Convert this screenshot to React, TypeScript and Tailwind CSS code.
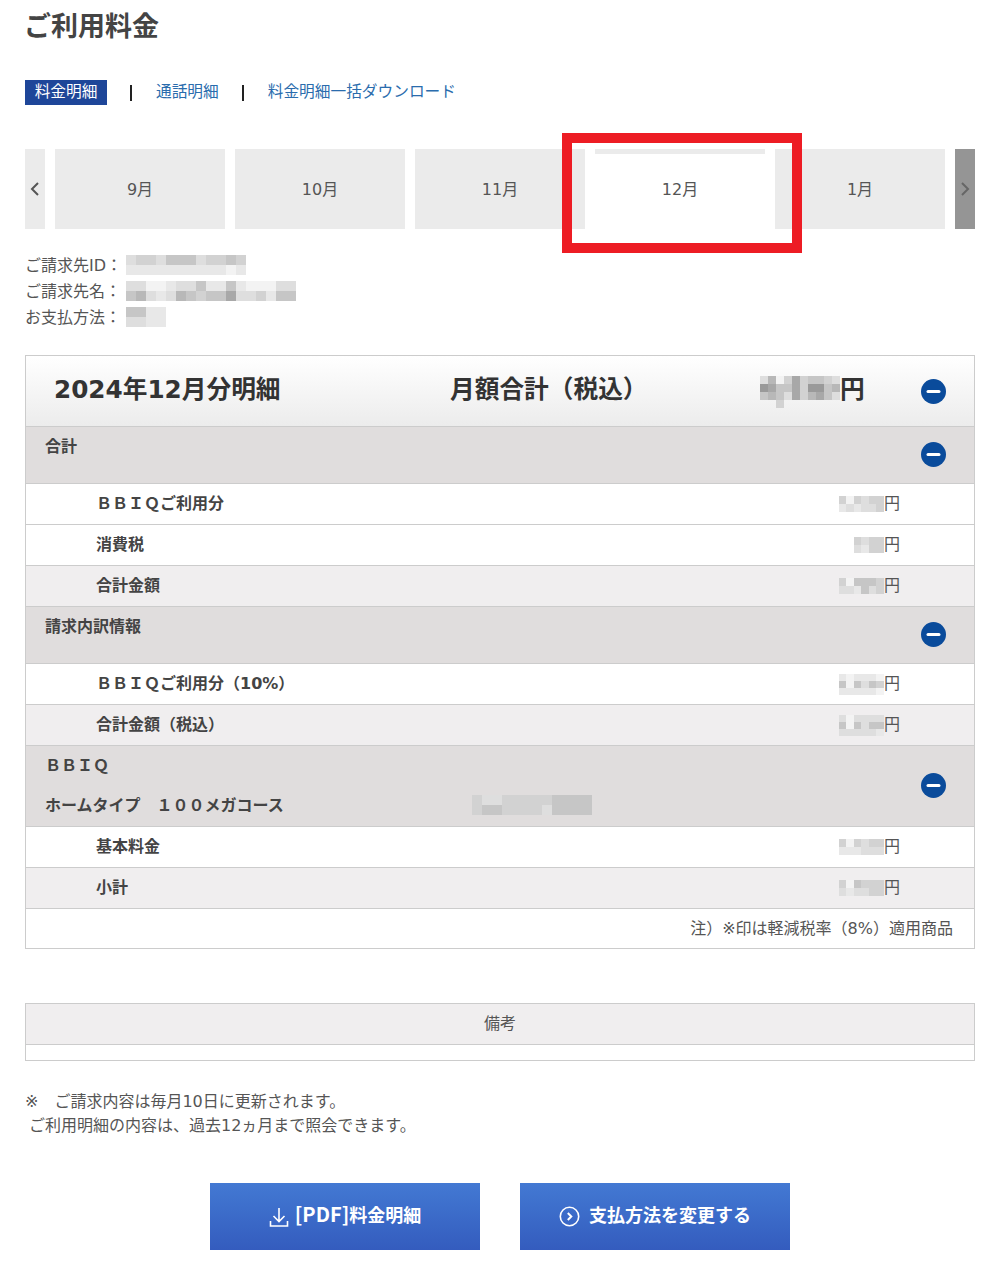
import React from "react";

const shade: Record<string, string> = {
  "0": "bg-transparent",
  "1": "bg-[#f3f3f3]",
  "2": "bg-[#e8e8e8]",
  "3": "bg-[#dedede]",
  "4": "bg-[#d2d2d2]",
  "5": "bg-[#c6c6c6]",
  "6": "bg-[#b8b8b8]",
  "7": "bg-[#a8a8a8]",
  "8": "bg-[#9a9a9a]",
};

function Mosaic({ rows, cell }: { rows: string[]; cell: string }) {
  return (
    <div className="flex flex-col shrink-0">
      {rows.map((r, i) => (
        <div key={i} className="flex">
          {r.split("").map((c, j) => (
            <div key={j} className={`${cell} ${shade[c]}`} />
          ))}
        </div>
      ))}
    </div>
  );
}

const big = "w-[10px] h-[10px]";
const two = "w-[7.5px] h-[8px]";
const three = "w-[7.5px] h-[7px]";
const head = "w-[8px] h-[8px]";

function MinusIcon() {
  return (
    <svg width="25" height="25" viewBox="0 0 25 25" className="shrink-0">
      <circle cx="12.5" cy="12.5" r="12.5" fill="#0a4b9b" />
      <line x1="7" y1="12.5" x2="18" y2="12.5" stroke="#fff" strokeWidth="3" strokeLinecap="round" />
    </svg>
  );
}

function Chevron({ dir, color }: { dir: "l" | "r"; color: string }) {
  return (
    <svg width="10" height="16" viewBox="0 0 10 16">
      <path d={dir === "l" ? "M8 2 L2 8 L8 14" : "M2 2 L8 8 L2 14"} fill="none" stroke={color} strokeWidth="2" />
    </svg>
  );
}

function Row({ label, rows, alt }: { label: string; rows: string[]; alt?: boolean }) {
  return (
    <div className={`h-[41px] border-b border-[#cccccc] flex items-center justify-between pl-[70px] pr-[74px] ${alt ? "bg-[#f0eeef]" : "bg-white"}`}>
      <span className="font-bold text-[#444444]">{label}</span>
      <div className="flex items-center text-[#555555]">
        <Mosaic rows={rows} cell={rows.length === 3 ? three : two} />
        <span>円</span>
      </div>
    </div>
  );
}

function Group({ label }: { label: string }) {
  return (
    <div className="h-[57px] border-b border-[#cccccc] bg-[#e0dddd] flex justify-between pl-[19px] pr-[28px]">
      <span className="font-bold text-[#444444] leading-[24px] pt-[8px]">{label}</span>
      <div className="flex items-center pb-[2px]"><MinusIcon /></div>
    </div>
  );
}

export default function App() {
  return (
    <div className="w-[1000px] h-[1273px] bg-white px-[25px] text-[16px] leading-[26px] text-[#555555] font-['DejaVu_Sans','Noto_Sans_CJK_JP',sans-serif] overflow-hidden">
      <h1 className="h-[52px] leading-[54px] -ml-[1px] text-[27px] font-bold text-[#444444]">ご利用料金</h1>

      <div className="mt-[28px] h-[25px] flex items-center text-[15.7px] text-[#2a6cad]">
        <span className="w-[82px] h-[25px] pb-[2px] bg-[#1e4699] text-white flex items-center justify-center">料金明細</span>
        <div className="ml-[23px] w-[2px] h-[16px] bg-[#222222]" />
        <span className="ml-[24px] pb-[2px]">通話明細</span>
        <div className="ml-[23px] w-[2px] h-[16px] bg-[#222222]" />
        <span className="ml-[24px] pb-[2px]">料金明細一括ダウンロード</span>
      </div>

      <div className="relative mt-[44px] h-[80px] flex gap-[10px] text-center">
        <div className="w-[20px] bg-[#ebebeb] flex items-center justify-center"><Chevron dir="l" color="#555555" /></div>
        {["9月", "10月", "11月"].map((m) => (
          <div key={m} className="w-[170px] bg-[#ebebeb] pt-[2px] flex items-center justify-center">{m}</div>
        ))}
        <div className="w-[170px] bg-white border-t-[5px] border-[#ebebeb] pb-[3px] flex items-center justify-center">12月</div>
        <div className="w-[170px] bg-[#ebebeb] pt-[2px] flex items-center justify-center">1月</div>
        <div className="w-[20px] bg-[#959595] flex items-center justify-center"><Chevron dir="r" color="#666666" /></div>
        <div className="absolute left-[537px] top-[-16px] w-[240px] h-[120px] border-[10px] border-[#ed1c24]" />
      </div>

      <div className="mt-[23px] h-[78px]">
        <div className="h-[26px] flex items-center">
          <span className="w-[101px] pt-[2px]">ご請求先ID：</span>
          <Mosaic cell={big} rows={["344355534454", "222222222212"]} />
        </div>
        <div className="h-[26px] flex items-center">
          <span className="w-[101px] pt-[2px]">ご請求先名：</span>
          <Mosaic cell={big} rows={["33112335225211133", "56323654557334255"]} />
        </div>
        <div className="h-[26px] flex items-center">
          <span className="w-[101px] pt-[2px]">お支払方法：</span>
          <Mosaic cell={big} rows={["5522", "3322"]} />
        </div>
      </div>

      <div className="mt-[25px] border border-[#cccccc]">
        <div className="h-[71px] border-b border-[#cccccc] bg-gradient-to-b from-white to-[#ececec] flex items-center font-bold text-[24.7px] text-[#333333]">
          <span className="w-[424px] pl-[28px] pb-[2px]">2024年12月分明細</span>
          <span className="w-[310px] pb-[2px]">月額合計（税込）</span>
          <div className="h-[32px] self-center mb-[-2px]">
            <Mosaic cell={head} rows={["3614745543", "8755748856", "5653746753", "0040000000"]} />
          </div>
          <span className="pb-[2px]">円</span>
          <div className="ml-auto mr-[28px]"><MinusIcon /></div>
        </div>

        <Group label="合計" />
        <Row label="ＢＢＩＱご利用分" rows={["414344", "232334"]} />
        <Row label="消費税" rows={["4344", "3244"]} />
        <Row label="合計金額" alt rows={["415554", "332534"]} />

        <Group label="請求内訳情報" />
        <Row label="ＢＢＩＱご利用分（10%）" rows={["212221", "515354", "222221"]} />
        <Row label="合計金額（税込）" alt rows={["313333", "515355", "333332"]} />

        <div className="h-[81px] border-b border-[#cccccc] bg-[#e0dddd] flex justify-between pl-[19px] pr-[28px] font-bold text-[#444444]">
          <div className="leading-[40px]">
            <div>ＢＢＩＱ</div>
            <div className="flex items-center">
              <span className="w-[427px]">ホームタイプ　１００メガコース</span>
              <div className="mb-[2px]">
                <Mosaic cell={big} rows={["433444445555", "455444435555"]} />
              </div>
            </div>
          </div>
          <div className="flex items-center pb-[2px]"><MinusIcon /></div>
        </div>
        <Row label="基本料金" rows={["414344", "222333"]} />
        <Row label="小計" alt rows={["415444", "323344"]} />

        <div className="h-[39px] flex items-center justify-end pr-[21px]">注）※印は軽減税率（8%）適用商品</div>
      </div>

      <div className="mt-[54px] border border-[#cccccc] h-[58px]">
        <div className="h-[41px] bg-[#f0eeef] border-b border-[#cccccc] flex items-center justify-center">備考</div>
      </div>

      <div className="mt-[29px] leading-[24px]">
        <p>※　ご請求内容は毎月10日に更新されます。</p>
        <p className="pl-[4px]">ご利用明細の内容は、過去12ヵ月まで照会できます。</p>
      </div>

      <div className="mt-[45px] flex justify-center gap-[40px] text-[18px] font-bold text-white font-['Noto_Sans_CJK_JP',sans-serif]">
        <div className="w-[270px] h-[67px] bg-gradient-to-b from-[#4379d3] to-[#345cbe] flex items-center justify-center gap-[6px]">
          <svg width="20" height="22" viewBox="0 0 20 22" fill="none" stroke="#fff" strokeWidth="1.6">
            <path d="M10 2 V15 M4.5 10 L10 15.5 L15.5 10 M1.5 15 V20 H18.5 V15" />
          </svg>
          <span className="pb-[5px]"><span className="text-[20px]">[PDF]</span>料金明細</span>
        </div>
        <div className="w-[270px] h-[67px] bg-gradient-to-b from-[#4379d3] to-[#345cbe] flex items-center justify-center gap-[9px]">
          <svg width="21" height="21" viewBox="0 0 21 21" fill="none" stroke="#fff">
            <circle cx="10.5" cy="10.5" r="9.2" strokeWidth="1.6" />
            <path d="M8.8 7 L12.3 10.5 L8.8 14" strokeWidth="2" />
          </svg>
          <span className="pb-[5px]">支払方法を変更する</span>
        </div>
      </div>
    </div>
  );
}
